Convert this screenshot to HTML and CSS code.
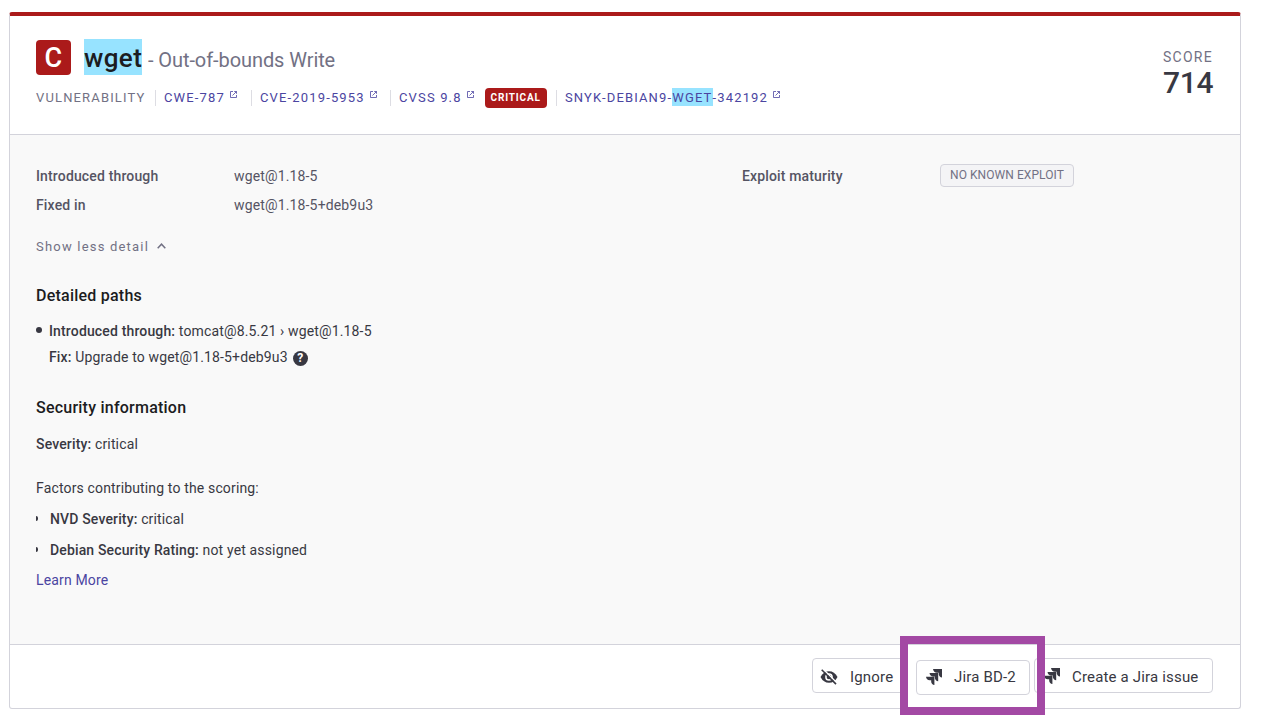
FILE: index.html
```html
<!DOCTYPE html>
<html lang="en">
<head>
<meta charset="utf-8">
<title>wget - Out-of-bounds Write</title>
<link rel="stylesheet" href="styles.css">
</head>
<body>
<svg class="defs" aria-hidden="true">
  <symbol id="ext" viewBox="0 0 7 7"><path d="M3 .5H.5v6h6V4M4.200.5h2.300v2.300M6.500.5 2.500 4.500" fill="none" stroke="currentColor" stroke-width=".8"/></symbol>
  <symbol id="jira" viewBox="0 0 16 16"><path d="M7 0h9v8.500c-1.800-.3-3-1.500-3.200-3.100V3.700h-1.900C8.900 3.700 7.300 2.200 7 0zM3.500 3.900h8.700v8.400c-1.800-.3-3.100-1.500-3.300-3.100V7.500H7.200C5.100 7.500 3.800 6 3.500 3.900zM0 7.700h8.400V16c-1.800-.3-3-1.500-3.200-3.100v-1.600H3.700C1.600 11.300.3 9.800 0 7.700z" fill="currentColor"/></symbol>
</svg>
<article class="card">
  <header class="head">
    <div class="head-main">
      <div class="title-row">
        <span class="sev">C</span>
        <h1 class="title"><mark>wget</mark></h1>
        <span class="subtitle">- Out-of-bounds Write</span>
      </div>
      <div class="meta">
        <span class="meta-item kind">VULNERABILITY</span>
        <a class="meta-item cwe">CWE-787<svg class="ext"><use href="#ext"/></svg></a>
        <a class="meta-item cve">CVE-2019-5953<svg class="ext"><use href="#ext"/></svg></a>
        <a class="meta-item cvss">CVSS 9.8<svg class="ext"><use href="#ext"/></svg><span class="critical">CRITICAL</span></a>
        <a class="meta-item snyk">SNYK-DEBIAN9-<mark>WGET</mark>-342192<svg class="ext"><use href="#ext"/></svg></a>
      </div>
    </div>
    <div class="score"><span class="score-label">SCORE</span><span class="score-value">714</span></div>
  </header>
  <section class="body">
    <div class="facts">
      <dl class="fact-list">
        <dt>Introduced through</dt><dd>wget@1.18-5</dd>
        <dt>Fixed in</dt><dd>wget@1.18-5+deb9u3</dd>
      </dl>
      <dl class="fact-list">
        <dt>Exploit maturity</dt><dd><span class="tag">NO KNOWN EXPLOIT</span></dd>
      </dl>
    </div>
    <div class="toggle">Show less detail<svg class="chev" viewBox="0 0 9 6"><path d="M.7 5.200 4.500 1.200l3.800 4" fill="none" stroke="currentColor" stroke-width="1.500"/></svg></div>
    <h2 class="section-title">Detailed paths</h2>
    <ul class="paths">
      <li><span><b>Introduced through:</b> tomcat@8.5.21 › wget@1.18-5</span></li>
      <li class="fix"><span><b>Fix:</b> Upgrade to wget@1.18-5+deb9u3</span><span class="help">?</span></li>
    </ul>
    <h2 class="section-title">Security information</h2>
    <p class="severity"><b>Severity:</b> critical</p>
    <p class="factors-label">Factors contributing to the scoring:</p>
    <ul class="factors">
      <li><span><b>NVD Severity:</b> critical</span></li>
      <li><span><b>Debian Security Rating:</b> not yet assigned</span></li>
    </ul>
    <a class="learn">Learn More</a>
  </section>
  <footer class="foot">
    <button class="btn ignore"><svg class="eye" viewBox="0 0 18 16"><path d="M.5 8Q3.500 2.200 9 2.200T17.500 8Q14.500 13.800 9 13.800T.5 8z" fill="currentColor"/><circle cx="9" cy="8" r="3.100" fill="none" stroke="#fff" stroke-width="1.500"/><path d="M3.200.2 17 14" stroke="#fff" stroke-width="1.500"/><path d="M1.700.8 16 15.100" stroke="currentColor" stroke-width="1.600"/></svg><span>Ignore</span></button>
    <button class="btn linked"><svg class="jira"><use href="#jira"/></svg><span>Jira BD-2</span></button>
    <button class="btn create"><svg class="jira"><use href="#jira"/></svg><span>Create a Jira issue</span></button>
  </footer>
</article>
<div class="callout"></div>
</body>
</html>
```
FILE: styles.css
```css
* { box-sizing: border-box; margin: 0; padding: 0; }
body { background: #fff; color: #383842; font: 14px/20px Roboto, "Liberation Sans", sans-serif; letter-spacing: .15px; height: 723px; overflow: hidden; padding: 12px 0 0 9px; position: relative; }
.defs { display: none; }
b, dt { font-weight: 500; }
ul { list-style: none; }
.card { width: 1232px; height: 697px; border: 1px solid #d3d3db; border-top: 4px solid #ab1a1a; border-radius: 3px; display: flex; flex-direction: column; }
.head { height: 119px; border-bottom: 1px solid #d3d3db; padding: 23px 27px 0 26px; display: flex; justify-content: space-between; }
.title-row { display: flex; align-items: center; height: 36px; }
.sev { width: 35px; height: 35px; margin-right: 13px; border-radius: 4px; background: #ab1a1a; color: #fff; font-weight: 500; font-size: 27px; line-height: 37px; text-align: center; }
.title { font-size: 26px; line-height: 36px; font-weight: 500; color: #1c1c21; letter-spacing: .4px; }
mark { background: #97e3ff; color: inherit; }
.title mark { display: block; width: 58px; height: 36px; line-height: 38px; }
.subtitle { margin-left: 6px; padding-top: 5px; font-size: 20px; letter-spacing: -.08px; color: #727184; }
.meta { display: flex; align-items: center; height: 20px; margin-top: 13px; font-size: 13px; letter-spacing: 1.150px; color: #4b45a1; white-space: nowrap; }
.meta-item { display: flex; align-items: center; height: 16px; line-height: 16px; }
.meta-item + .meta-item { border-left: 1px solid #dddde3; padding-left: 8px; }
.meta-item mark { height: 18px; line-height: 18px; margin-top: -2px; padding-top: 1px; line-height: 17px; }
.kind { width: 119px; color: #727184; }
.cwe { width: 96px; }
.cve { width: 139px; }
.cvss { width: 166px; }
.ext { width: 7px; height: 7px; margin: -8px 0 0 5px; }
.critical { margin-left: 11px; width: 62px; height: 20px; border-radius: 4px; background: #ab1a1a; color: #fff; font-size: 10px; font-weight: 700; line-height: 20px; letter-spacing: .85px; text-align: center; }
.score { display: flex; flex-direction: column; align-items: flex-start; width: 50px; padding-top: 8px; }
.score-label { font-size: 14px; line-height: 20px; letter-spacing: 1.250px; color: #727184; }
.score-value { font-size: 30px; line-height: 32px; font-weight: 500; letter-spacing: -.3px; }
.body { height: 510px; background: #f9f9f9; border-bottom: 1px solid #d3d3db; padding: 26px 26px 0; }
.facts { display: grid; grid-template-columns: 706px 1fr; height: 58px; color: #555463; }
.fact-list { display: grid; grid-template-columns: 198px 1fr; grid-auto-rows: 29px; line-height: 30px; }
.tag { display: block; width: 134px; height: 23px; margin-top: 3px; border: 1px solid #d3d3db; border-radius: 4px; background: #f4f4f6; color: #727184; font-size: 12px; letter-spacing: .07px; line-height: 21px; text-align: center; }
.toggle { display: flex; align-items: center; margin-top: 18px; font-size: 13px; letter-spacing: 1.200px; color: #727184; }
.chev { width: 9px; height: 6px; margin: -2px 0 0 8px; }
.section-title { font-size: 16px; line-height: 20px; font-weight: 500; letter-spacing: .23px; color: #1c1c21; margin-top: 29px; }
.paths { margin-top: 12px; }
.paths li { display: flex; align-items: center; height: 26px; padding-left: 13px; }
.paths li:first-child::before { content: ""; width: 6px; height: 6px; border-radius: 3px; background: #383842; margin: -3px 7px 0 -13px; }
.help { width: 15px; height: 15px; border-radius: 50%; background: #383842; color: #fff; font-size: 12px; font-weight: 700; line-height: 15px; text-align: center; margin: 2px 0 0 5px; }
.paths + .section-title { margin-top: 28px; }
.severity { margin-top: 16px; }
.factors-label { margin-top: 24px; }
.factors { margin-top: 5px; }
.factors li { display: flex; align-items: center; height: 31px; }
.factors li::before { content: ""; width: 2px; height: 5px; background: #383842; margin: -1px 12px 0 0; border-radius: 0 2px 2px 0; }
.learn { display: block; color: #4b45a1; margin-top: 5px; }
.foot { flex: 1; display: flex; align-items: flex-start; justify-content: flex-end; padding: 13px 27px 0; }
.btn { display: flex; align-items: center; height: 35px; border: 1px solid #d3d3db; border-radius: 4px; background: #fff; color: #383842; font: 15px/20px Roboto, sans-serif; letter-spacing: .17px; white-space: nowrap; }
.btn span { margin-top: 2px; }
.ignore { width: 92px; padding-left: 7px; margin-right: 12px; }
.linked { width: 114px; padding-left: 9px; margin: 2px 4px 0 0; }
.linked span { margin-top: -1px; }
.linked .jira { margin-top: -2px; }
.create { width: 179px; padding-left: 9px; }
.eye { width: 18px; height: 16px; margin: 2px 12px 0 0; }
.jira { width: 16px; height: 16px; margin: 1px 12px 0 0; }
.callout { position: absolute; left: 900px; top: 636px; width: 145px; height: 79px; border: 8px solid #a349a4; }
```
